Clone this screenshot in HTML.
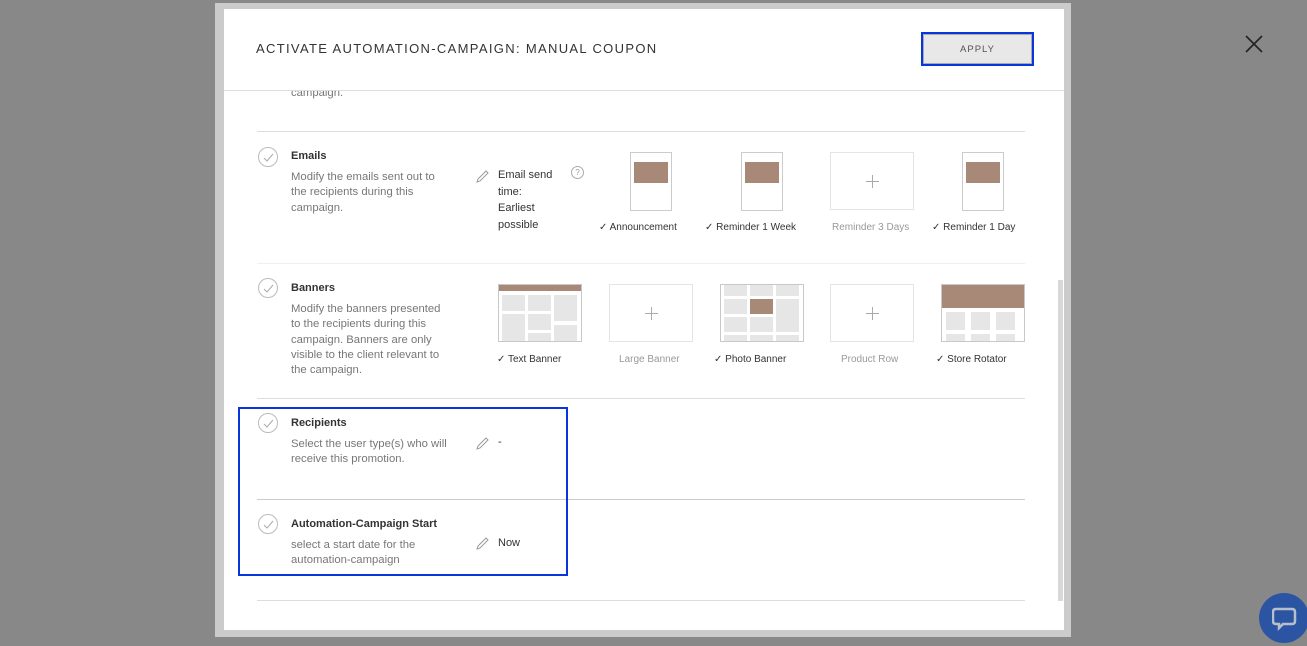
<!DOCTYPE html>
<html><head><meta charset="utf-8"><style>
*{margin:0;padding:0;box-sizing:border-box}
body{width:1307px;height:646px;background:#888;position:relative;overflow:hidden;font-family:"Liberation Sans",sans-serif;color:#333}
.a{position:absolute;white-space:nowrap}
.frame{position:absolute;left:215px;top:3px;width:856px;height:634px;background:#cbcbcb}
.white{position:absolute;left:224px;top:9px;width:840px;height:621px;background:#fff}
.line{position:absolute;left:257px;width:768px;height:1px;background:#ddd}
.circ{position:absolute;width:20px;height:20px;border:1px solid #bbb;border-radius:50%}
.circ svg{position:absolute;left:4px;top:5px}
.t{position:absolute;font-size:11px;font-weight:bold;color:#333;white-space:nowrap}
.d{position:absolute;font-size:11.3px;color:#777;line-height:15.3px}
.v{position:absolute;font-size:11px;color:#333;line-height:16.5px}
.lab{position:absolute;font-size:10px;color:#333;white-space:nowrap}
.lab.g{color:#999}
.box{position:absolute;border:1px solid #ccc;background:#fff}
.plus{position:absolute;width:84px;height:58px;border:1px solid #e4e4e4}
.plus:before{content:"";position:absolute;left:35px;top:28px;width:13px;height:1px;background:#aaa}
.plus:after{content:"";position:absolute;left:41px;top:22px;width:1px;height:13px;background:#aaa}
</style></head><body>
<div class="frame"></div>
<div class="white"></div>
<div class="a" style="left:256px;top:41px;font-size:13px;letter-spacing:1.33px;color:#333">ACTIVATE AUTOMATION-CAMPAIGN: MANUAL COUPON</div>
<div class="a" style="left:921px;top:32px;width:113px;height:34px;border:2px solid #0636dc;background:#e8e8e8;box-shadow:inset 0 0 0 1px #aaa;font-size:9.5px;letter-spacing:1px;color:#555;display:flex;align-items:center;justify-content:center">APPLY</div>
<svg class="a" style="left:1245px;top:35px" width="18" height="18"><path d="M1 1L17 17M17 1L1 17" stroke="#222" stroke-width="1.6"/></svg>
<div class="a" style="left:224px;top:90px;width:840px;height:1px;background:#ddd"></div>
<div class="d" style="left:291px;top:91px;height:8px;overflow:hidden"><div style="margin-top:-5px">campaign.</div></div>
<div class="a" style="left:1058px;top:280px;width:5px;height:321px;background:#d8d8d8"></div>

<div class="line" style="top:131px"></div>
<div class="circ" style="left:258px;top:147px"><svg width="11" height="9"><path d="M1 5L4 8L10 1" fill="none" stroke="#aaa" stroke-width="1"/></svg></div>
<div class="t" style="left:291px;top:150px">Emails</div>
<div class="d" style="left:291px;top:170px">Modify the emails sent out to<br>the recipients during this<br>campaign.</div>
<svg class="a" style="left:476px;top:170px" width="14" height="13"><path d="M1 12L2 9L10 1L12 3L4 11Z" fill="none" stroke="#999" stroke-width="1"/></svg>
<div class="v" style="left:498px;top:167px">Email send<br>time:<br>Earliest<br>possible</div>
<div class="a" style="left:571px;top:166px;width:13px;height:13px;border:1px solid #aaa;border-radius:50%;font-size:8px;color:#999;text-align:center;line-height:11px">?</div>
<div class="box" style="left:630px;top:152px;width:42px;height:59px"><div style="position:absolute;left:3px;top:9px;width:34px;height:21px;background:#a88876"></div></div>
<div class="box" style="left:741px;top:152px;width:42px;height:59px"><div style="position:absolute;left:3px;top:9px;width:34px;height:21px;background:#a88876"></div></div>
<div class="plus" style="left:830px;top:152px"></div>
<div class="box" style="left:962px;top:152px;width:42px;height:59px"><div style="position:absolute;left:3px;top:9px;width:34px;height:21px;background:#a88876"></div></div>
<div class="lab" style="left:599px;top:222px">✓ Announcement</div>
<div class="lab" style="left:705px;top:222px">✓ Reminder 1 Week</div>
<div class="lab g" style="left:832px;top:222px">Reminder 3 Days</div>
<div class="lab" style="left:932px;top:222px">✓ Reminder 1 Day</div>

<div class="line" style="top:263px;background:#f0f0f0"></div>
<div class="circ" style="left:258px;top:278px"><svg width="11" height="9"><path d="M1 5L4 8L10 1" fill="none" stroke="#aaa" stroke-width="1"/></svg></div>
<div class="t" style="left:291px;top:282px">Banners</div>
<div class="d" style="left:291px;top:302px">Modify the banners presented<br>to the recipients during this<br>campaign. Banners are only<br>visible to the client relevant to<br>the campaign.</div>
<svg class="a" style="left:497px;top:283px" width="86" height="60">
<rect x="1.5" y="1.5" width="83" height="57" fill="#fff" stroke="#c8c8c8"/>
<rect x="2" y="2" width="82" height="6" fill="#a88876"/>
<g fill="#e6e6e6"><rect x="5" y="12" width="23" height="16"/><rect x="5" y="31" width="23" height="27"/><rect x="31" y="12" width="23" height="16"/><rect x="31" y="31" width="23" height="16"/><rect x="31" y="50" width="23" height="8"/><rect x="57" y="12" width="23" height="26"/><rect x="57" y="42" width="23" height="16"/></g></svg>
<div class="plus" style="left:609px;top:284px"></div>
<svg class="a" style="left:719px;top:283px" width="86" height="60">
<rect x="1.5" y="1.5" width="83" height="57" fill="#fff" stroke="#c8c8c8"/>
<g fill="#e6e6e6"><rect x="5" y="2" width="23" height="11"/><rect x="31" y="2" width="23" height="11"/><rect x="57" y="2" width="23" height="11"/><rect x="5" y="16" width="23" height="15"/><rect x="57" y="16" width="23" height="33"/><rect x="5" y="34" width="23" height="15"/><rect x="31" y="34" width="23" height="15"/><rect x="5" y="52" width="23" height="6"/><rect x="31" y="52" width="23" height="6"/><rect x="57" y="52" width="23" height="6"/></g>
<rect x="31" y="16" width="23" height="15" fill="#a88876"/></svg>
<div class="plus" style="left:830px;top:284px"></div>
<svg class="a" style="left:940px;top:283px" width="86" height="60">
<rect x="1.5" y="1.5" width="83" height="57" fill="#fff" stroke="#c8c8c8"/>
<rect x="2" y="2" width="82" height="23" fill="#a88876"/>
<g fill="#e6e6e6"><rect x="6" y="29" width="19" height="18"/><rect x="31" y="29" width="19" height="18"/><rect x="56" y="29" width="19" height="18"/><rect x="6" y="51" width="19" height="7"/><rect x="31" y="51" width="19" height="7"/><rect x="56" y="51" width="19" height="7"/></g></svg>
<div class="lab" style="left:497px;top:354px">✓ Text Banner</div>
<div class="lab g" style="left:619px;top:354px">Large Banner</div>
<div class="lab" style="left:714px;top:354px">✓ Photo Banner</div>
<div class="lab g" style="left:841px;top:354px">Product Row</div>
<div class="lab" style="left:936px;top:354px">✓ Store Rotator</div>

<div class="line" style="top:398px"></div>
<div class="circ" style="left:258px;top:413px"><svg width="11" height="9"><path d="M1 5L4 8L10 1" fill="none" stroke="#aaa" stroke-width="1"/></svg></div>
<div class="t" style="left:291px;top:417px">Recipients</div>
<div class="d" style="left:291px;top:437px">Select the user type(s) who will<br>receive this promotion.</div>
<svg class="a" style="left:476px;top:437px" width="14" height="13"><path d="M1 12L2 9L10 1L12 3L4 11Z" fill="none" stroke="#999" stroke-width="1"/></svg>
<div class="v" style="left:498px;top:434px">-</div>

<div class="line" style="top:499px;background:#ccc"></div>
<div class="circ" style="left:258px;top:514px"><svg width="11" height="9"><path d="M1 5L4 8L10 1" fill="none" stroke="#aaa" stroke-width="1"/></svg></div>
<div class="t" style="left:291px;top:518px">Automation-Campaign Start</div>
<div class="d" style="left:291px;top:538px">select a start date for the<br>automation-campaign</div>
<svg class="a" style="left:476px;top:537px" width="14" height="13"><path d="M1 12L2 9L10 1L12 3L4 11Z" fill="none" stroke="#999" stroke-width="1"/></svg>
<div class="v" style="left:498px;top:535px">Now</div>
<div class="line" style="top:600px"></div>

<div class="a" style="left:238px;top:407px;width:330px;height:169px;border:2px solid #0636dc"></div>

<div class="a" style="left:1259px;top:593px;width:50px;height:50px;border-radius:50%;background:#2b55a3"></div>
<svg class="a" style="left:1272px;top:607px" width="25" height="24"><path d="M4 2H20Q23 2 23 5V14Q23 17 20 17H11L7 21V17H4Q1 17 1 14V5Q1 2 4 2Z" fill="none" stroke="#b8bfcc" stroke-width="2.5"/></svg>
</body></html>
